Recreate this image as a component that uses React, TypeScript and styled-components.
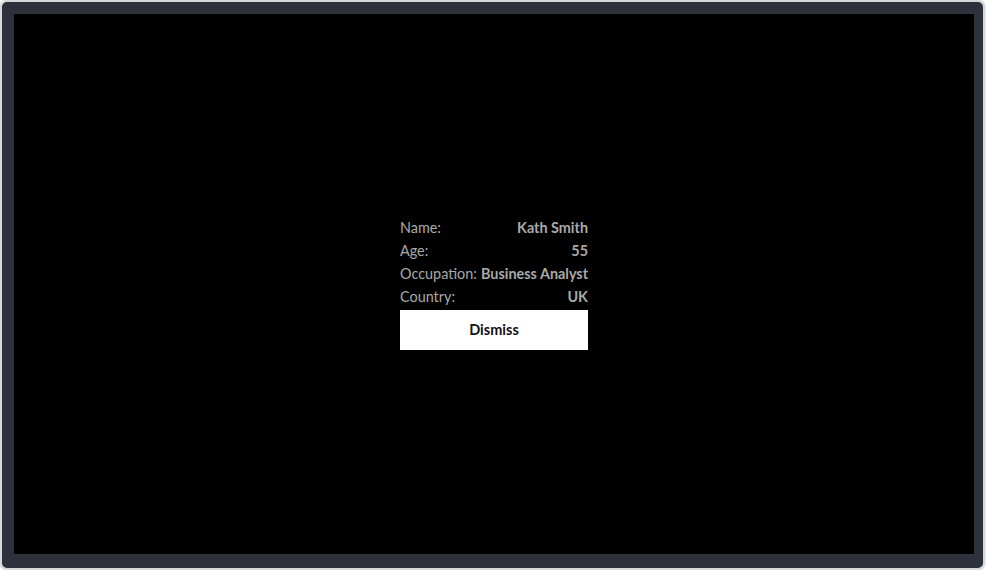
import React from "react";
import styled, { createGlobalStyle } from "styled-components";

const Global = createGlobalStyle`
  html, body { margin: 0; padding: 0; background: #ffffff; }
  body { font-family: Lato, "Noto Sans", sans-serif; }
`;

const Frame = styled.div`
  box-sizing: border-box;
  width: 985px;
  height: 570px;
  border: 2px solid #d6d7d9;
  border-radius: 7px;
  background: #2e313b;
  padding: 12px 11px 14px 12px;
  box-shadow: 0 0 0 1px #ececed;
`;

const Screen = styled.div`
  width: 960px;
  height: 540px;
  background: #000000;
  display: flex;
  align-items: center;
  justify-content: center;
`;

const Card = styled.div`
  width: 188px;
  display: flex;
  flex-direction: column;
  margin-top: -3px;
`;

const Row = styled.div`
  display: flex;
  justify-content: space-between;
  align-items: baseline;
  gap: 2px;
  height: 23px;
  line-height: 23px;
  font-size: 14.4px;
  color: #a9a9a9;
`;

const Label = styled.span`
  font-weight: 400;
  white-space: nowrap;
`;

const Value = styled.span`
  font-weight: 700;
  white-space: nowrap;
`;

const Button = styled.button`
  margin-top: 2px;
  height: 40px;
  width: 188px;
  border: none;
  background: #ffffff;
  color: #111111;
  font-family: Lato, "Noto Sans", sans-serif;
  font-size: 14.5px;
  font-weight: 700;
  padding: 0;
  cursor: pointer;
`;

const rows = [
  ["Name:", "Kath Smith"],
  ["Age:", "55"],
  ["Occupation:", "Business Analyst"],
  ["Country:", "UK"],
];

export default function App() {
  return (
    <>
      <Global />
      <Frame>
        <Screen>
          <Card>
            {rows.map(([l, v]) => (
              <Row key={l}>
                <Label>{l}</Label>
                <Value>{v}</Value>
              </Row>
            ))}
            <Button>Dismiss</Button>
          </Card>
        </Screen>
      </Frame>
    </>
  );
}
